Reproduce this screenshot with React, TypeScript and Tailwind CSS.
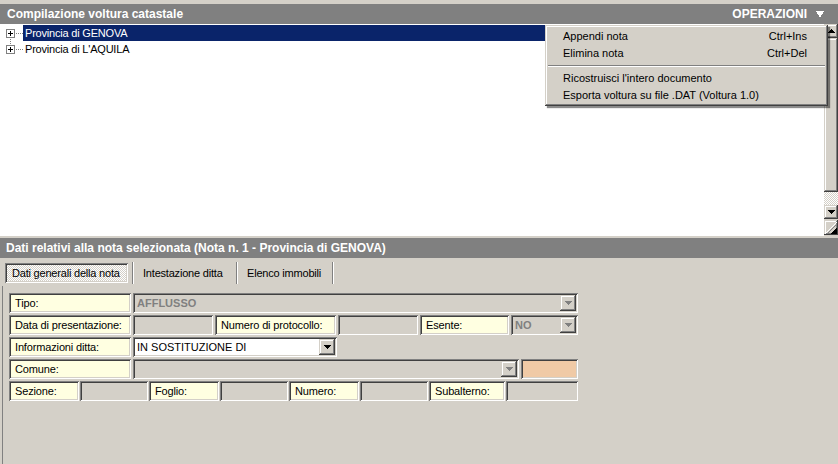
import React from "react";

const sunken =
  "shadow-[inset_1px_1px_0_#808080,inset_-1px_-1px_0_#ffffff,inset_2px_2px_0_#404040,inset_-2px_-2px_0_#d4d0c8]";
const raised =
  "shadow-[inset_-1px_-1px_0_#404040,inset_1px_1px_0_#d4d0c8,inset_-2px_-2px_0_#808080,inset_2px_2px_0_#ffffff]";

function Arrow({ dir = "down", color = "#000000" }: { dir?: "down" | "up"; color?: string }) {
  return (
    <svg width="7" height="4" viewBox="0 0 7 4" shapeRendering="crispEdges">
      {dir === "down" ? (
        <g fill={color}>
          <rect x="0" y="0" width="7" height="1" />
          <rect x="1" y="1" width="5" height="1" />
          <rect x="2" y="2" width="3" height="1" />
          <rect x="3" y="3" width="1" height="1" />
        </g>
      ) : (
        <g fill={color}>
          <rect x="3" y="0" width="1" height="1" />
          <rect x="2" y="1" width="3" height="1" />
          <rect x="1" y="2" width="5" height="1" />
          <rect x="0" y="3" width="7" height="1" />
        </g>
      )}
    </svg>
  );
}

function TreeIcon({ first }: { first: boolean }) {
  return (
    <svg width="23" height="16" viewBox="0 0 23 16" shapeRendering="crispEdges" className="shrink-0">
      <g fill="#808080">
        {[16, 18, 20, 22].map((x) => (
          <rect key={x} x={x} y="8" width="1" height="1" />
        ))}
        {first
          ? [14].map((y) => <rect key={y} x="10" y={y} width="1" height="1" />)
          : [0, 2].map((y) => <rect key={y} x="10" y={y} width="1" height="1" />)}
      </g>
      <rect x="6.5" y="4.5" width="8" height="8" fill="#ffffff" stroke="#808080" strokeWidth="1" />
      <rect x="8" y="8" width="5" height="1" fill="#000000" />
      <rect x="10" y="6" width="1" height="5" fill="#000000" />
    </svg>
  );
}

function Label({ w, children }: { w: string; children: React.ReactNode }) {
  return (
    <div className={`${w} h-[20px] shrink-0 bg-[#ffffe1] ${sunken} flex items-center pl-[6px] whitespace-nowrap overflow-hidden tracking-[-0.15px]`}>
      {children}
    </div>
  );
}

function Field({ w, bg = "bg-[#d4d0c8]" }: { w: string; bg?: string }) {
  return <div className={`${w} h-[20px] shrink-0 ${bg} ${sunken}`} />;
}

function Combo({
  w,
  text,
  disabled,
}: {
  w: string;
  text?: string;
  disabled?: boolean;
}) {
  return (
    <div
      className={`${w} h-[20px] shrink-0 ${disabled ? "bg-[#d4d0c8]" : "bg-white"} ${sunken} flex items-stretch py-[2px] pr-[2px]`}
    >
      <span
        className={`flex-1 flex items-center pl-[4px] whitespace-nowrap overflow-hidden ${
          disabled ? "font-bold text-[#808080]" : "text-black"
        }`}
      >
        {text}
      </span>
      <div className={`w-[16px] shrink-0 bg-[#d4d0c8] ${raised} flex items-center justify-center`}>
        <Arrow color={disabled ? "#808080" : "#000000"} />
      </div>
    </div>
  );
}

function Menu() {
  const items = [
    ["Appendi nota", "Ctrl+Ins"],
    ["Elimina nota", "Ctrl+Del"],
  ];
  const items2 = ["Ricostruisci l'intero documento", "Esporta voltura su file .DAT (Voltura 1.0)"];
  return (
    <div
      className="absolute left-[545px] top-[1px] w-[283px] h-[81px] bg-[#d4d0c8] pt-[3px] shadow-[inset_-1px_-1px_0_#404040,inset_1px_1px_0_#d4d0c8,inset_-2px_-2px_0_#808080,inset_2px_2px_0_#ffffff,2px_2px_1px_rgba(0,0,0,0.45)] z-10"
    >
      {items.map(([a, b]) => (
        <div key={a} className="h-[17px] flex items-center justify-between pl-[18px] pr-[21px]">
          <span>{a}</span>
          <span>{b}</span>
        </div>
      ))}
      <div className="h-[8px] flex items-center px-[3px]">
        <div className="w-full h-[2px] border-t border-[#808080] border-b border-b-white" />
      </div>
      {items2.map((a) => (
        <div key={a} className="h-[17px] flex items-center pl-[18px] pr-[21px]">
          <span>{a}</span>
        </div>
      ))}
    </div>
  );
}

function Scrollbar() {
  return (
    <div className="w-[14px] shrink-0 flex flex-col bg-[#d4d0c8]">
      <div className={`h-[14px] shrink-0 ${raised} flex items-center justify-center`}>
        <Arrow dir="up" />
      </div>
      <div className={`h-[154px] shrink-0 ${raised}`} />
      <div className="h-[13px] shrink-0 bg-[image:repeating-conic-gradient(#ffffff_0%_25%,#d4d0c8_0%_50%)] bg-[length:2px_2px]" />
      <div className={`h-[14px] shrink-0 ${raised} flex items-center justify-center`}>
        <Arrow dir="down" />
      </div>
      <div className="h-[17px] shrink-0 flex items-start pt-[1px]">
        <div className={`w-[14px] h-[15px] ${raised} flex items-center justify-center`}>
          <svg width="12" height="12" viewBox="0 0 12 12" shapeRendering="crispEdges">
            <line x1="0" y1="12" x2="12" y2="0" stroke="#ffffff" strokeWidth="1" />
            <line x1="2" y1="12" x2="12" y2="2" stroke="#808080" strokeWidth="1" />
            <polygon points="5,12 12,12 12,5" fill="#000000" />
          </svg>
        </div>
      </div>
    </div>
  );
}

function Sep() {
  return <div className="w-[2px] h-[22px] shrink-0 border-l border-[#808080] border-r border-r-white" />;
}

export default function App() {
  return (
    <div className="w-[838px] h-[464px] overflow-hidden bg-[#d4d0c8] flex flex-col font-['Liberation_Sans',Arial,sans-serif] text-[11px] text-black">
      <div className="h-[4px] shrink-0" />
      <div className="h-[20px] shrink-0 bg-[#808080] flex items-center justify-between pl-[7px] pr-[14px] text-white font-bold text-[12px]">
        <span>Compilazione voltura catastale</span>
        <span className="flex items-center gap-[9px]">
          <span>OPERAZIONI</span>
          <svg width="8" height="7" viewBox="0 0 8 7" shapeRendering="crispEdges">
            <polygon points="0,0 8,0 4,7" fill="#ffffff" />
          </svg>
        </span>
      </div>
      <div className="relative h-[212px] shrink-0 flex bg-white">
        <div className="flex-1 pt-[1px] flex flex-col tracking-[-0.2px]">
          <div className="h-[16px] flex items-stretch">
            <TreeIcon first />
            <span className="flex-1 bg-[#0a246a] text-white pl-[2px] flex items-center">Provincia di GENOVA</span>
          </div>
          <div className="h-[16px] flex items-stretch">
            <TreeIcon first={false} />
            <span className="flex-1 pl-[2px] flex items-center">Provincia di L'AQUILA</span>
          </div>
        </div>
        <Scrollbar />
        <Menu />
      </div>
      <div className="h-[2px] shrink-0" />
      <div className="h-[20px] shrink-0 bg-[#808080] flex items-center pl-[6px] text-white font-bold text-[12px]">
        Dati relativi alla nota selezionata (Nota n. 1 - Provincia di GENOVA)
      </div>
      <div className="h-[28px] shrink-0 flex items-start pt-[5px] pl-[5px] tracking-[-0.2px]">
        <div
          className={`w-[123px] h-[20px] shrink-0 flex items-center pl-[7px] whitespace-nowrap bg-[image:repeating-conic-gradient(#ffffff_0%_25%,#d4d0c8_0%_50%)] bg-[length:2px_2px] ${sunken}`}
        >
          Dati generali della nota
        </div>
        <div className="w-[4px] shrink-0" />
        <div className="-mt-[1px]"><Sep /></div>
        <div className="w-[102px] h-[20px] shrink-0 flex items-center pl-[9px]">Intestazione ditta</div>
        <div className="-mt-[1px]"><Sep /></div>
        <div className="w-[94px] h-[20px] shrink-0 flex items-center pl-[9px]">Elenco immobili</div>
        <div className="-mt-[1px]"><Sep /></div>
      </div>
      <div className="flex-1 ml-[2px] border-l border-[#808080] pt-[7px] pl-[6px] flex flex-col gap-[2px]">
        <div className="flex gap-[2px]">
          <Label w="w-[122px]">Tipo:</Label>
          <Combo w="w-[445px]" text="AFFLUSSO" disabled />
        </div>
        <div className="flex gap-[2px]">
          <Label w="w-[122px]">Data di presentazione:</Label>
          <Field w="w-[80px]" />
          <Label w="w-[121px]">Numero di protocollo:</Label>
          <Field w="w-[80px]" />
          <Label w="w-[89px]">Esente:</Label>
          <Combo w="w-[67px]" text="NO" disabled />
        </div>
        <div className="flex gap-[2px]">
          <Label w="w-[122px]">Informazioni ditta:</Label>
          <Combo w="w-[204px]" text="IN SOSTITUZIONE DI" />
        </div>
        <div className="flex gap-[2px]">
          <Label w="w-[122px]">Comune:</Label>
          <Combo w="w-[386px]" disabled />
          <Field w="w-[57px]" bg="bg-[#f0caa6]" />
        </div>
        <div className="flex gap-[1px]">
          <Label w="w-[70px]">Sezione:</Label>
          <Field w="w-[68px]" />
          <Label w="w-[70px]">Foglio:</Label>
          <Field w="w-[68px]" />
          <Label w="w-[70px]">Numero:</Label>
          <Field w="w-[68px]" />
          <Label w="w-[76px]">Subalterno:</Label>
          <Field w="w-[72px]" />
        </div>
      </div>
    </div>
  );
}
